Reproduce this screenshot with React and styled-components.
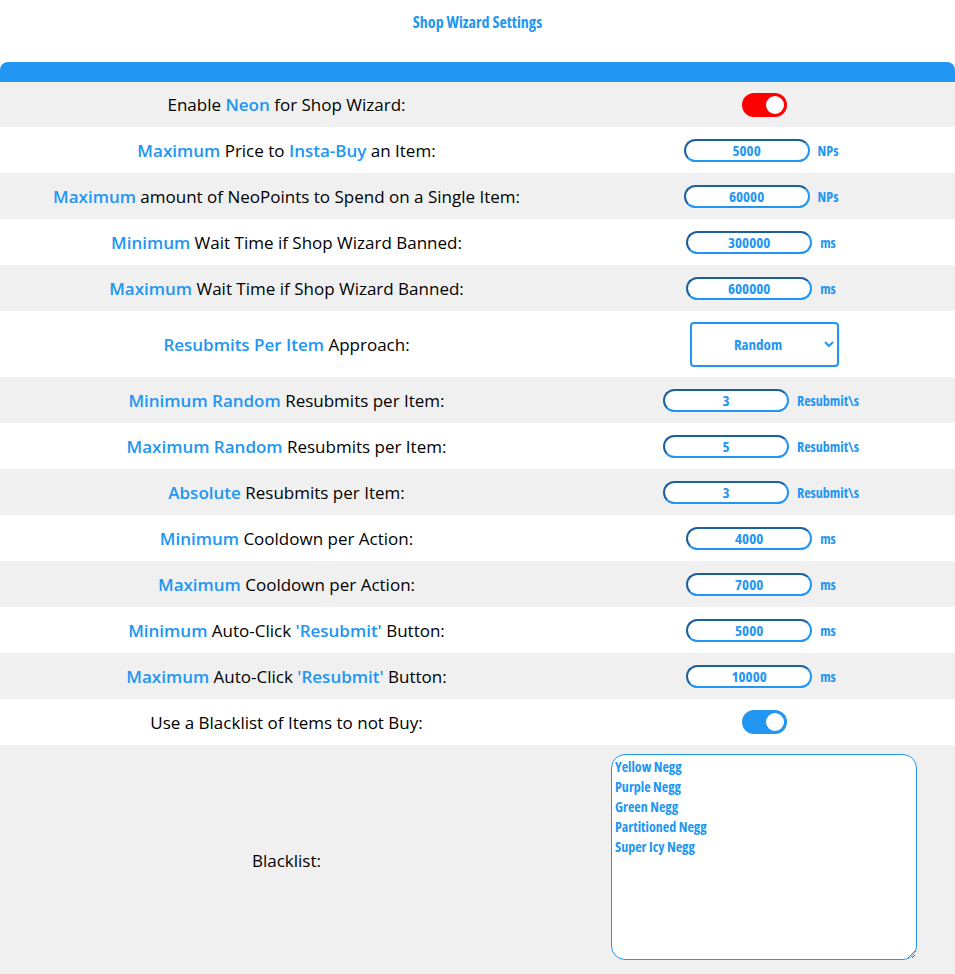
import styled, { createGlobalStyle } from 'styled-components';
import { useState } from 'react';

const GlobalStyle = createGlobalStyle`
    body{
        margin: 0;
        background: white;
        font-family: "Open Sans", "DejaVu Sans", sans-serif;
    }
`;

const condensed = `"Open Sans", "DejaVu Sans", sans-serif`;

const Page = styled.div`
    width: 955px;
`;

const Title = styled.h1`
    margin: 0;
    height: 62px;
    padding-top: 11px;
    box-sizing: border-box;
    text-align: center;
    font-family: ${condensed};
    font-stretch: 75%;
    font-size: 16px;
    font-weight: bold;
    color: #2196f3;
`;

const HeaderBar = styled.div`
    height: 20px;
    background: #2196f3;
    border-radius: 8px 8px 0 0;
`;

const Table = styled.div`
    display: grid;
    grid-template-columns: 573px 382px;
`;

const Row = styled.div`
    display: contents;
    & > div{
        background: ${p => (p.$grey ? '#f0f0f0' : 'white')};
        height: ${p => p.$h || 46}px;
    }
`;

const LabelCell = styled.div`
    display: flex;
    align-items: center;
    justify-content: center;
    font-size: 17px;
    color: black;
`;

const Hl = styled.span`
    color: #2196f3;
    font-weight: 600;
`;

const ValueCell = styled.div`
    display: flex;
    align-items: center;
    justify-content: center;
    gap: 8px;
`;

const UnitCell = styled(ValueCell)`
    padding-right: 6px;
    box-sizing: border-box;
`;

const NumInput = styled.input`
    width: 126px;
    height: 23px;
    box-sizing: border-box;
    border: 2px solid #2196f3;
    border-top-color: #1c5f9e;
    border-left-color: #1c5f9e;
    border-radius: 12px;
    text-align: center;
    font-family: ${condensed};
    font-stretch: 75%;
    font-weight: bold;
    font-size: 15px;
    color: #2196f3;
    background: white;
    outline: none;
    padding: 0;
`;

const Unit = styled.span`
    font-family: ${condensed};
    font-stretch: 75%;
    font-weight: bold;
    font-size: 14px;
    color: #2196f3;
`;

const Select = styled.select`
    width: 149px;
    height: 45px;
    border: 2px solid #2196f3;
    border-radius: 4px;
    background: white;
    text-align: center;
    text-align-last: center;
    font-family: ${condensed};
    font-stretch: 75%;
    font-weight: bold;
    font-size: 15px;
    color: #2196f3;
`;

const Switch = styled.button`
    width: 45px;
    height: 24px;
    border: none;
    padding: 0;
    border-radius: 12px;
    background: ${p => p.$color};
    position: relative;
    cursor: pointer;
    &::after{
        content: '';
        position: absolute;
        top: 3px;
        right: 3px;
        width: 18px;
        height: 18px;
        border-radius: 50%;
        background: white;
    }
`;

const TextArea = styled.textarea`
    width: 306px;
    height: 206px;
    box-sizing: border-box;
    border: 1px solid #2196f3;
    border-radius: 14px;
    padding: 2px 3px;
    font-family: ${condensed};
    font-stretch: 75%;
    font-weight: bold;
    font-size: 14px;
    line-height: 20px;
    color: #2196f3;
    resize: both;
    outline: none;
`;

const BlacklistCell = styled(ValueCell)`
    justify-content: flex-start;
    align-items: flex-start;
    padding: 9px 0 0 38px;
    box-sizing: border-box;
`;

const inputRows = [
    { label: <><Hl>Maximum</Hl> Price to <Hl>Insta-Buy</Hl> an Item:</>, value: '5000', unit: 'NPs' },
    { label: <><Hl>Maximum</Hl> amount of NeoPoints to Spend on a Single Item:</>, value: '60000', unit: 'NPs' },
    { label: <><Hl>Minimum</Hl> Wait Time if Shop Wizard Banned:</>, value: '300000', unit: 'ms' },
    { label: <><Hl>Maximum</Hl> Wait Time if Shop Wizard Banned:</>, value: '600000', unit: 'ms' },
];

const resubmitRows = [
    { label: <><Hl>Minimum Random</Hl> Resubmits per Item:</>, value: '3', unit: 'Resubmit\\s' },
    { label: <><Hl>Maximum Random</Hl> Resubmits per Item:</>, value: '5', unit: 'Resubmit\\s' },
    { label: <><Hl>Absolute</Hl> Resubmits per Item:</>, value: '3', unit: 'Resubmit\\s' },
    { label: <><Hl>Minimum</Hl> Cooldown per Action:</>, value: '4000', unit: 'ms' },
    { label: <><Hl>Maximum</Hl> Cooldown per Action:</>, value: '7000', unit: 'ms' },
    { label: <><Hl>Minimum</Hl> Auto-Click <Hl>'Resubmit'</Hl> Button:</>, value: '5000', unit: 'ms' },
    { label: <><Hl>Maximum</Hl> Auto-Click <Hl>'Resubmit'</Hl> Button:</>, value: '10000', unit: 'ms' },
];

const InputRow = ({ row, grey }) => (
    <Row $grey={grey}>
        <LabelCell><span>{row.label}</span></LabelCell>
        <UnitCell>
            <NumInput defaultValue={row.value} />
            <Unit>{row.unit}</Unit>
        </UnitCell>
    </Row>
);

const App = () => {
    const [neon, setNeon] = useState(true);
    const [useBlacklist, setUseBlacklist] = useState(true);
    return (
        <Page>
            <GlobalStyle />
            <Title>Shop Wizard Settings</Title>
            <HeaderBar />
            <Table>
                <Row $grey $h={45}>
                    <LabelCell><span>Enable <Hl>Neon</Hl> for Shop Wizard:</span></LabelCell>
                    <ValueCell>
                        <Switch $color="#ff0000" onClick={() => setNeon(!neon)} />
                    </ValueCell>
                </Row>
                {inputRows.map((row, i) => (
                    <InputRow key={i} row={row} grey={i % 2 === 1} />
                ))}
                <Row $h={66}>
                    <LabelCell><span><Hl>Resubmits Per Item</Hl> Approach:</span></LabelCell>
                    <ValueCell>
                        <Select defaultValue="Random">
                            <option>Random</option>
                            <option>Absolute</option>
                        </Select>
                    </ValueCell>
                </Row>
                {resubmitRows.map((row, i) => (
                    <InputRow key={i} row={row} grey={i % 2 === 0} />
                ))}
                <Row>
                    <LabelCell><span>Use a Blacklist of Items to not Buy:</span></LabelCell>
                    <ValueCell>
                        <Switch $color="#2196f3" onClick={() => setUseBlacklist(!useBlacklist)} />
                    </ValueCell>
                </Row>
                <Row $grey $h={230}>
                    <LabelCell><span>Blacklist:</span></LabelCell>
                    <BlacklistCell>
                        <TextArea defaultValue={'Yellow Negg\nPurple Negg\nGreen Negg\nPartitioned Negg\nSuper Icy Negg'} />
                    </BlacklistCell>
                </Row>
            </Table>
        </Page>
    );
};

export default App;
